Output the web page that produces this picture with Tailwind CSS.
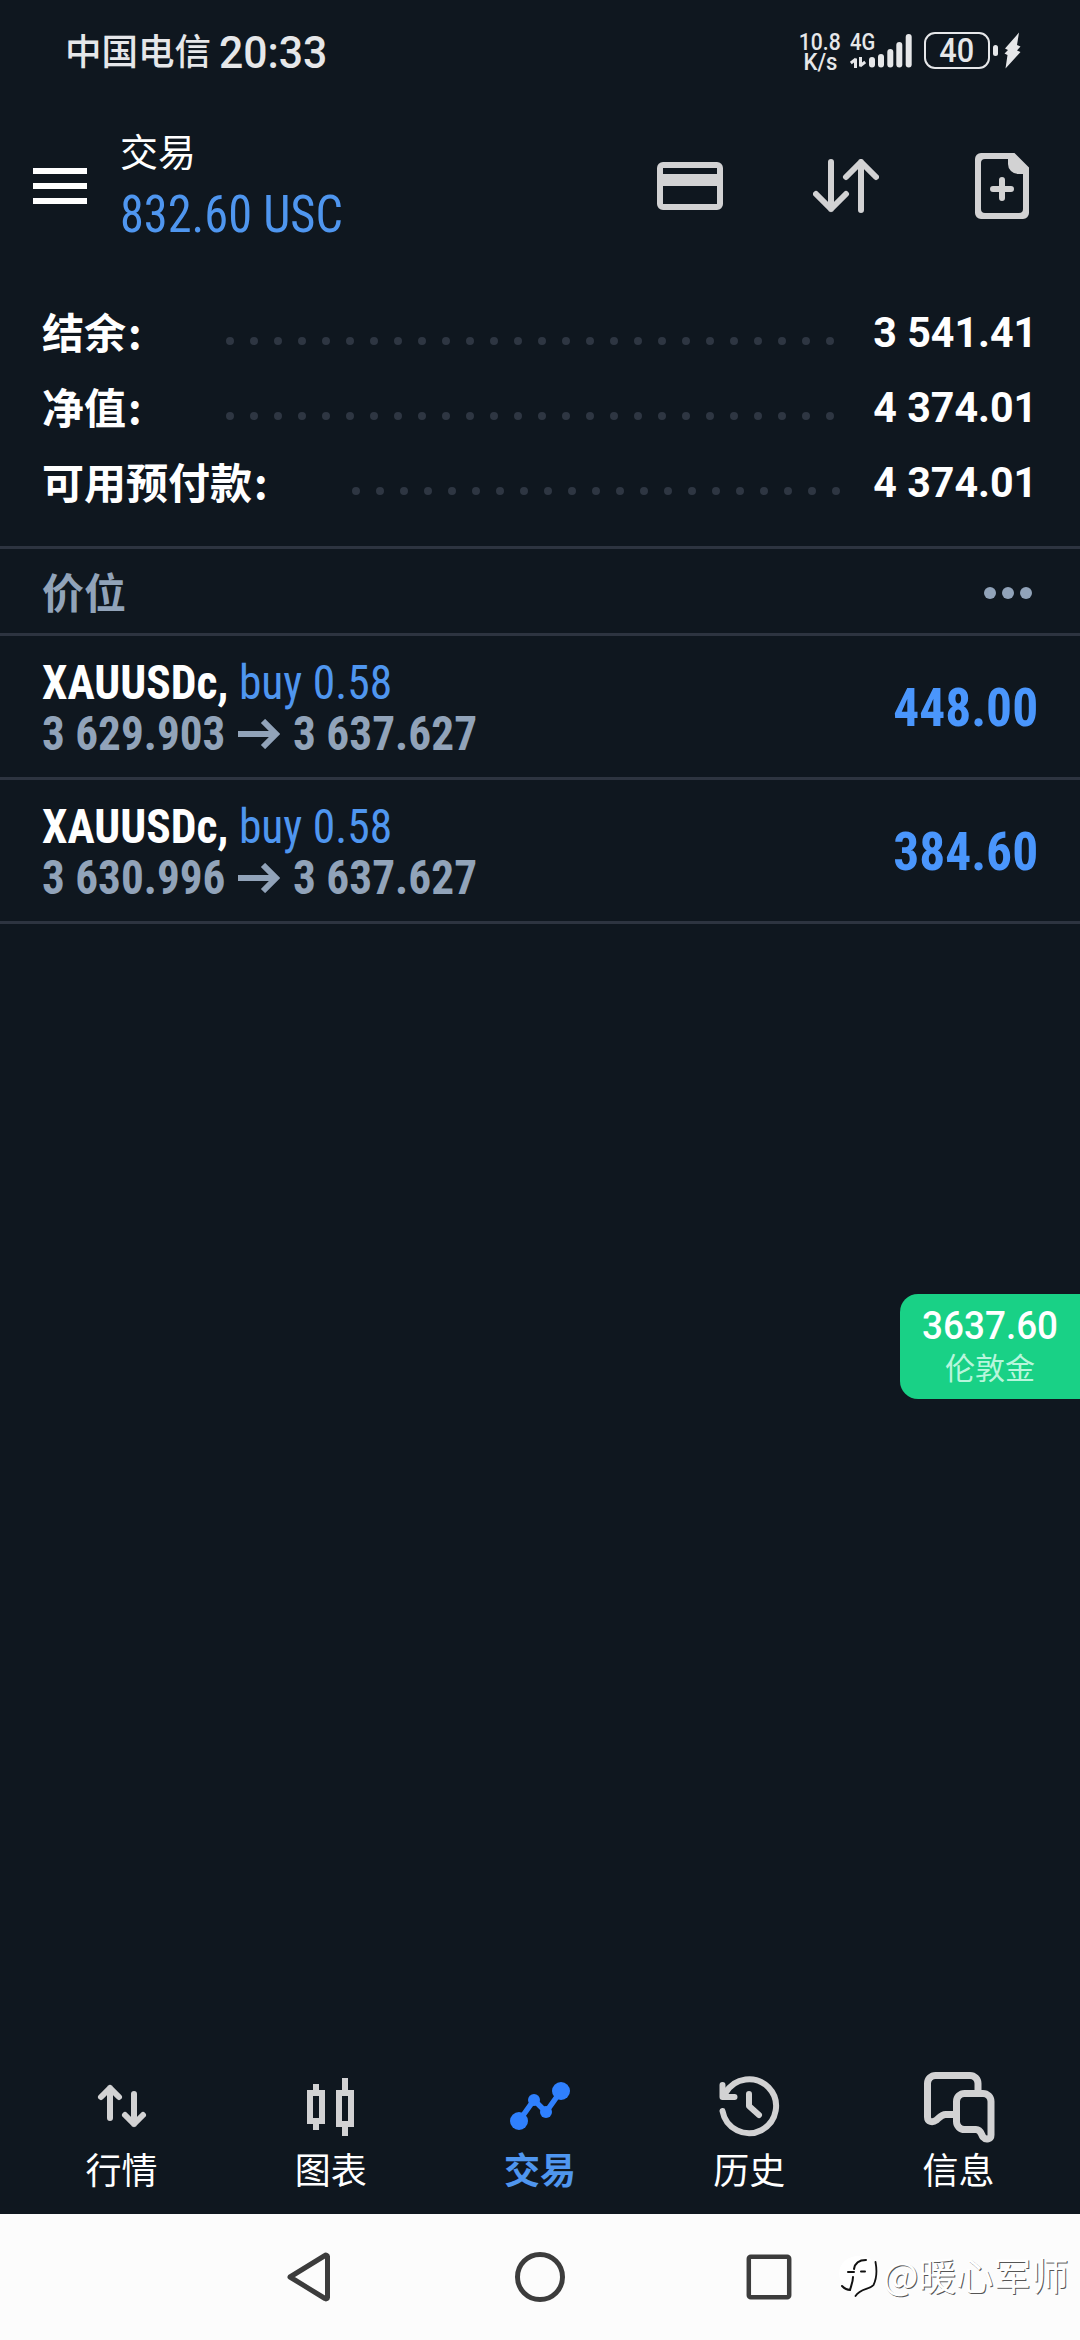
<!DOCTYPE html>
<html lang="zh-CN">
<head>
<meta charset="utf-8">
<title>交易</title>
<script src="https://cdn.jsdelivr.net/npm/@tailwindcss/browser@4"></script>
</head>
<body class="bg-[#0f171f]">
<div class="relative flex h-[2340px] w-[1080px] flex-col overflow-hidden bg-[#0f171f] leading-none whitespace-nowrap text-white font-['Roboto','Noto_Sans_CJK_SC',sans-serif]">

  <!-- Status bar -->
  <div class="flex h-[105px] shrink-0 items-start text-[#e6e7e9]">
    <div class="ml-[65px] mt-[32px] w-[154px] text-[36.5px] font-medium font-['Noto_Sans_CJK_SC',sans-serif]">中国电信</div>
    <div class="mt-[31px] w-[109px] origin-left scale-x-[.96] text-[44.5px] font-medium">20:33</div>
    <div class="ml-[470px] mt-[31px] flex w-[44px] flex-col items-center text-[24px] leading-[19px] font-medium">
      <div class="mt-[2px] origin-center scale-x-[.88]">10.8</div>
      <div class="mt-px scale-x-[.92]">K/s</div>
    </div>
    <div class="ml-[8px] mt-[31px] w-[25px]">
      <div class="mt-[2px] origin-left scale-x-[.84] text-[24px] leading-[19px] font-medium">4G</div>
      <svg class="mt-[5px] h-[11px] w-[16px]" viewBox="0 0 16 11" fill="none" stroke="currentColor" stroke-width="3"><path d="M5.500 11V1.500M6 2L.8 6M10.500 0v9.500M10 9L15.200 5"/></svg>
    </div>
    <svg class="-ml-[6px] mt-[34px] h-[34px] w-[43px] shrink-0" viewBox="0 0 43 34" fill="currentColor"><rect x="0" y="23" width="6" height="10.500" rx="3"/><rect x="9" y="20" width="6" height="13.500" rx="3"/><rect x="18.300" y="15" width="6" height="18.500" rx="3"/><rect x="27.300" y="8" width="6" height="25.500" rx="3"/><rect x="36.700" y="0" width="6" height="33.500" rx="3"/></svg>
    <div class="ml-[12px] mt-[32px] flex h-[37px] w-[66px] shrink-0 items-center justify-center rounded-[11px] border-[2.500px] border-current text-[33px] font-medium"><span class="scale-x-[.93]">40</span></div>
    <svg class="ml-[2px] mt-[32px] h-[37px] w-[29px] shrink-0" viewBox="0 0 29 37" fill="currentColor"><rect x="1" y="13" width="5" height="11" rx="2.500"/><path d="M27 .5L13 16.500l3 1.500-3.500 3.500 3 1.500L13.500 36.500 28.500 20l-3.500-1.500 3.500-4-3.500-1.500z"/></svg>
  </div>

  <!-- App header -->
  <div class="flex h-[180px] shrink-0 items-start">
    <svg class="ml-[33px] mt-[63px] h-[36px] w-[54px]" viewBox="0 0 54 36" fill="#fff"><path d="M0 0h54v6H0zM0 15h54v6H0zM0 30h54v6H0z"/></svg>
    <div class="ml-[33px] mt-[26px] w-[537px]">
      <div class="text-[38px] font-['Noto_Sans_CJK_SC',sans-serif]">交易</div>
      <div class="mt-[20px] origin-left scale-x-[.93] text-[52px] font-[450] text-[#4f96ef] font-['Roboto_Condensed','Roboto',sans-serif]">832.60 USC</div>
    </div>
    <svg class="mt-[57px] h-[48px] w-[66px]" viewBox="0 0 66 48"><rect x="3" y="3" width="60" height="42" rx="3" fill="none" stroke="#d2d2d3" stroke-width="6"/><path d="M3 12h60v12H3z" fill="#d2d2d3"/></svg>
    <svg class="ml-[90px] mt-[54px] h-[54px] w-[66px]" viewBox="0 0 66 54" fill="none" stroke="#d2d2d3" stroke-width="6" stroke-linecap="round" stroke-linejoin="round"><path d="M18 3v47M3 35l15 15 15-15M48 51V3M33 18L48 3l15 15"/></svg>
    <svg class="ml-[96px] mt-[48px] h-[66px] w-[54px]" viewBox="0 0 54 66"><path fill="#d2d2d3" fill-rule="evenodd" d="M6 0H39.500L54 14.500V60a6 6 0 0 1-6 6H6a6 6 0 0 1-6-6V6a6 6 0 0 1 6-6zM10 6a4 4 0 0 0-4 4v46a4 4 0 0 0 4 4h34a4 4 0 0 0 4-4V21h-5A10 10 0 0 1 33 11V6z"/><path d="M27 27v18M18 36h18" stroke="#d2d2d3" stroke-width="6" stroke-linecap="round"/></svg>
  </div>

  <!-- Account summary -->
  <div class="flex h-[261px] shrink-0 flex-col pt-[10px] pl-[42px] pr-[43px] text-[42px] font-bold">
    <div class="flex h-[75px] items-center">
      <div class="-mt-[4px] w-[180px] font-['Noto_Sans_CJK_SC',sans-serif]">结余<span class="ml-[2px]">:</span></div>
      <svg class="mt-[17px] h-[10px] w-[612px]" viewBox="0 0 612 10"><path d="M8 5H610" stroke="#2e3642" stroke-width="8" stroke-linecap="round" stroke-dasharray="0 24"/></svg>
      <div class="mt-px ml-auto origin-right scale-x-[.98]">3 541.41</div>
    </div>
    <div class="flex h-[75px] items-center">
      <div class="-mt-[4px] w-[180px] font-['Noto_Sans_CJK_SC',sans-serif]">净值<span class="ml-[2px]">:</span></div>
      <svg class="mt-[17px] h-[10px] w-[612px]" viewBox="0 0 612 10"><path d="M8 5H610" stroke="#2e3642" stroke-width="8" stroke-linecap="round" stroke-dasharray="0 24"/></svg>
      <div class="mt-px ml-auto origin-right scale-x-[.98]">4 374.01</div>
    </div>
    <div class="flex h-[75px] items-center">
      <div class="-mt-[4px] w-[306px] font-['Noto_Sans_CJK_SC',sans-serif]">可用预付款<span class="ml-[2px]">:</span></div>
      <svg class="mt-[17px] h-[10px] w-[492px]" viewBox="0 0 492 10"><path d="M8 5H490" stroke="#2e3642" stroke-width="8" stroke-linecap="round" stroke-dasharray="0 24"/></svg>
      <div class="mt-px ml-auto origin-right scale-x-[.98]">4 374.01</div>
    </div>
  </div>

  <!-- Positions header -->
  <div class="flex h-[90px] shrink-0 items-center justify-between border-y-3 border-[#2d3440] pl-[42px] pr-[48px] text-[#91a3b9]">
    <div class="text-[42px] font-bold font-['Noto_Sans_CJK_SC',sans-serif]">价位</div>
    <svg class="mt-[3px] h-[12px] w-[48px]" viewBox="0 0 48 12" fill="currentColor"><circle cx="6" cy="6" r="6"/><circle cx="24" cy="6" r="6"/><circle cx="42" cy="6" r="6"/></svg>
  </div>

  <!-- Positions -->
  <div class="flex h-[144px] shrink-0 items-start justify-between border-b-3 border-[#2d3440] pl-[42px] pr-[42px] font-['Roboto_Condensed','Roboto',sans-serif]">
    <div class="mt-[23px]">
      <div class="origin-left scale-x-[.938] text-[48.500px]"><span class="font-bold">XAUUSDc,</span> <span class="font-[450] text-[#4f96ef]">buy 0.58</span></div>
      <div class="mt-[2px] flex items-center text-[48.500px] font-bold text-[#91a3b9]">
        <div class="w-[196px] origin-left scale-x-[.932]">3 629.903</div>
        <svg class="h-[30px] w-[42px]" viewBox="0 0 42 30" fill="none" stroke="currentColor" stroke-width="6"><path d="M0 15h38M25 2l13 13-13 13"/></svg>
        <div class="ml-[13px] origin-left scale-x-[.935]">3 637.627</div>
      </div>
    </div>
    <div class="mt-[45px] origin-right scale-x-[.953] text-[54px] font-bold text-[#4a96fc]">448.00</div>
  </div>
  <div class="flex h-[144px] shrink-0 items-start justify-between border-b-3 border-[#2d3440] pl-[42px] pr-[42px] font-['Roboto_Condensed','Roboto',sans-serif]">
    <div class="mt-[23px]">
      <div class="origin-left scale-x-[.938] text-[48.500px]"><span class="font-bold">XAUUSDc,</span> <span class="font-[450] text-[#4f96ef]">buy 0.58</span></div>
      <div class="mt-[2px] flex items-center text-[48.500px] font-bold text-[#91a3b9]">
        <div class="w-[196px] origin-left scale-x-[.932]">3 630.996</div>
        <svg class="h-[30px] w-[42px]" viewBox="0 0 42 30" fill="none" stroke="currentColor" stroke-width="6"><path d="M0 15h38M25 2l13 13-13 13"/></svg>
        <div class="ml-[13px] origin-left scale-x-[.935]">3 637.627</div>
      </div>
    </div>
    <div class="mt-[45px] origin-right scale-x-[.953] text-[54px] font-bold text-[#4a96fc]">384.60</div>
  </div>

  <!-- Floating quote -->
  <div class="absolute top-[1294px] right-0 flex h-[105px] w-[180px] flex-col items-center rounded-l-[18px] bg-[#19d186] pt-[13px]">
    <div class="scale-x-[.97] text-[38px] font-medium">3637.60</div>
    <div class="mt-[6px] text-[30px] text-[#b8f6dc] font-['Noto_Sans_CJK_SC',sans-serif]">伦敦金</div>
  </div>

  <div class="grow"></div>

  <!-- Bottom tabs -->
  <div class="grid h-[154px] shrink-0 grid-cols-5 pl-[17px] pr-[17px] text-center text-[36px] font-['Noto_Sans_CJK_SC',sans-serif]">
    <div class="flex flex-col items-center">
      <svg class="h-[90px] w-[90px]" viewBox="0 0 90 90" fill="none" stroke="#d2d2d3" stroke-width="6" stroke-linecap="round" stroke-linejoin="round"><path d="M33 58V28M24 37l9-9 9 9M57 34v30M48 55l9 9 9-9"/></svg>
      <div>行情</div>
    </div>
    <div class="flex flex-col items-center">
      <svg class="h-[90px] w-[90px]" viewBox="0 0 90 90" fill="none" stroke="#d2d2d3" stroke-width="6"><path d="M24 33h12v28H24zM30 24v9M30 61v9M53 33h12v31H53zM59 18v15M59 64v12"/></svg>
      <div>图表</div>
    </div>
    <div class="flex flex-col items-center text-[#4f96ef]">
      <svg class="h-[90px] w-[90px]" viewBox="0 0 90 90" fill="#2f80fe" stroke="#2f80fe"><path d="M24 61l15-21 12 12 15-21" fill="none" stroke-width="5.500"/><g stroke="none"><circle cx="24" cy="61" r="9"/><circle cx="39" cy="40" r="6"/><circle cx="51" cy="52" r="6"/><circle cx="66" cy="31" r="9"/></g></svg>
      <div class="font-bold">交易</div>
    </div>
    <div class="flex flex-col items-center">
      <svg class="h-[90px] w-[90px]" viewBox="0 0 90 90" fill="none" stroke="#d2d2d3" stroke-width="6" stroke-linecap="round" stroke-linejoin="round"><path d="M18.500 51A27 27 0 1 0 21.500 33M18.500 25v12h12M45 34v12l10 9"/><path d="M18.500 30L26 37h-7.500z" fill="#d2d2d3" stroke-width="2"/></svg>
      <div>历史</div>
    </div>
    <div class="flex flex-col items-center">
      <svg class="h-[90px] w-[90px]" viewBox="0 0 90 90" fill="none" stroke="#d2d2d3" stroke-width="7" stroke-linejoin="round"><path d="M65 33V23.500a8 8 0 0 0-8-8H22.500a8 8 0 0 0-8 8V57c0 5 5 6 9 3 3-2.500 5-5.500 9-5.500H41"/><path d="M51.500 33.500H70a8 8 0 0 1 8 8V75c0 4-5 5.500-8 2-2-3-2-7.500-7-7.500H51.500a8 8 0 0 1-8-8v-20a8 8 0 0 1 8-8z"/></svg>
      <div>信息</div>
    </div>
  </div>

  <!-- System navigation -->
  <div class="flex h-[126px] shrink-0 items-start bg-[#fcfcfc] pt-[37px] text-[#3c3c3c]">
    <svg class="ml-[284px] h-[52px] w-[50px]" viewBox="0 0 50 52" fill="none" stroke="currentColor" stroke-width="5" stroke-linejoin="round"><path d="M6 26L41 4.500a1.500 1.500 0 0 1 2.500 1v41a1.500 1.500 0 0 1-2.500 1z"/></svg>
    <svg class="ml-[180px] h-[52px] w-[52px]" viewBox="0 0 52 52" fill="none" stroke="currentColor" stroke-width="5"><circle cx="26" cy="26" r="22.500"/></svg>
    <svg class="ml-[177px] h-[52px] w-[52px]" viewBox="0 0 52 52" fill="none" stroke="currentColor" stroke-width="4.500"><rect x="5.800" y="5.800" width="40.400" height="40.400" rx="2"/></svg>
    <svg class="ml-[43px] mt-[3px] h-[48px] w-[44px]" viewBox="0 0 44 48" fill="none" stroke="#111" stroke-linecap="round"><path fill="#fff" stroke="none" d="M2 25C-2 12 8 2 21 2c10 0 17 4 17 16 0 10-3 14-8 16l-14 6z"/><path stroke-width="2" d="M16 15c1-6 5-9 12-9M10 18h6M23 17.500h4M15 23c0 5-2 9-3 13-3 0-5-1-8-4"/><path stroke-width="1.800" d="M37.500 8c1.500 8 1 17-2 23-4 5-13 3-18 11"/></svg>
    <div class="ml-px mt-[4px] text-[37.5px] text-white [text-shadow:1px_1px_0.5px_#555] font-['Noto_Sans_CJK_SC',sans-serif]">@暖心军师</div>
  </div>
</div>
</body>
</html>
